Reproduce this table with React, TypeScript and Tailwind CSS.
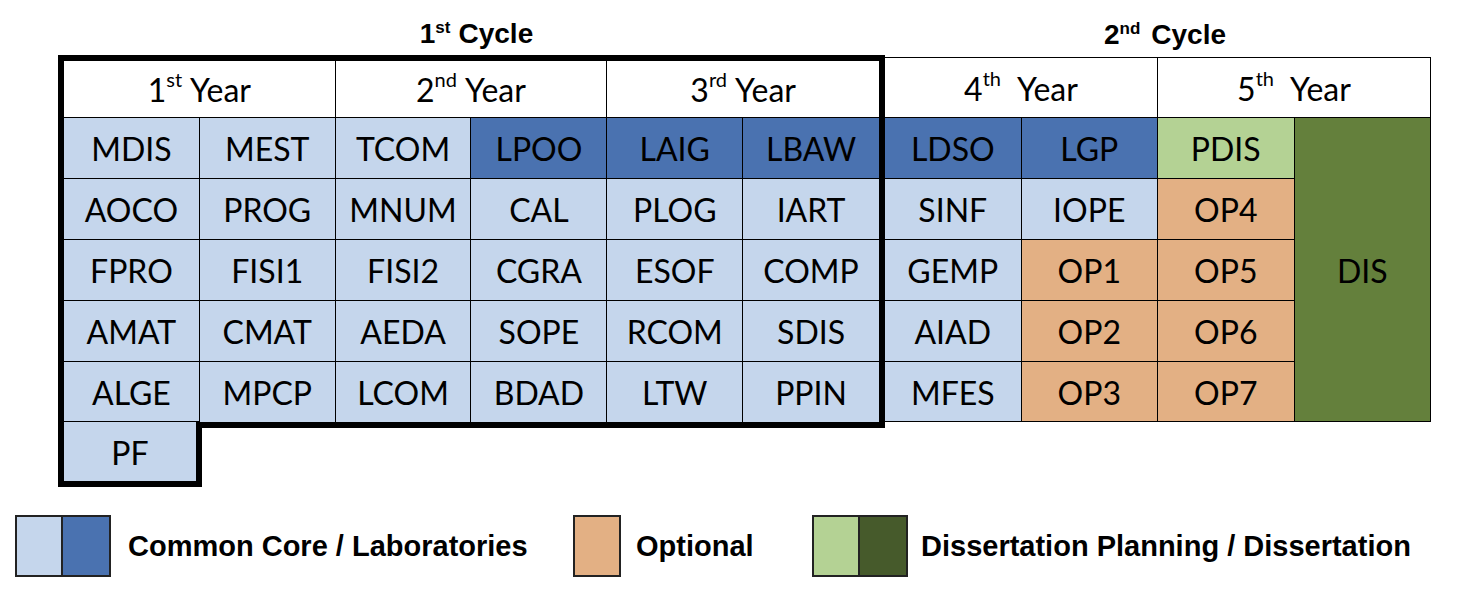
import React from "react";

type C = "L" | "D" | "G" | "O";
const bg: Record<C, string> = {
  L: "bg-[#c5d6ec]",
  D: "bg-[#4a72b0]",
  G: "bg-[#b4d294]",
  O: "bg-[#e3b084]",
};

const firstRows: [string, C][][] = [
  [["MDIS", "L"], ["MEST", "L"], ["TCOM", "L"], ["LPOO", "D"], ["LAIG", "D"], ["LBAW", "D"]],
  [["AOCO", "L"], ["PROG", "L"], ["MNUM", "L"], ["CAL", "L"], ["PLOG", "L"], ["IART", "L"]],
  [["FPRO", "L"], ["FISI1", "L"], ["FISI2", "L"], ["CGRA", "L"], ["ESOF", "L"], ["COMP", "L"]],
  [["AMAT", "L"], ["CMAT", "L"], ["AEDA", "L"], ["SOPE", "L"], ["RCOM", "L"], ["SDIS", "L"]],
  [["ALGE", "L"], ["MPCP", "L"], ["LCOM", "L"], ["BDAD", "L"], ["LTW", "L"], ["PPIN", "L"]],
];

const secondRows: [string, C][][] = [
  [["LDSO", "D"], ["LGP", "D"], ["PDIS", "G"]],
  [["SINF", "L"], ["IOPE", "L"], ["OP4", "O"]],
  [["GEMP", "L"], ["OP1", "O"], ["OP5", "O"]],
  [["AIAD", "L"], ["OP2", "O"], ["OP6", "O"]],
  [["MFES", "L"], ["OP3", "O"], ["OP7", "O"]],
];

const rowH = ["h-[61px]", "h-[61px]", "h-[61px]", "h-[61px]", "h-[60px]"];

const cellFont = "font-['Lato',sans-serif] text-[32px] leading-none text-black pt-[2px]";
const titleFont = "font-['Liberation_Sans',Arial,sans-serif] font-bold text-[28px] leading-none text-black";

function YearHeader({ n, sup, last }: { n: string; sup: string; last?: boolean }) {
  return (
    <div
      className={`col-span-2 flex items-center justify-center bg-white border-b border-black ${
        last ? "" : "border-r"
      } ${cellFont}`}
    >
      <span>{n}</span>
      <span className="text-[20px] leading-none relative top-[-11px]">{sup}</span>
      <span className="ml-[8px]">Year</span>
    </div>
  );
}

export default function App() {
  return (
    <div className="w-[1483px] h-[612px] bg-white overflow-hidden">
      <div className="flex pl-[58px]">
        {/* 1st cycle */}
        <div className="w-[827px] flex flex-col">
          <div className={`h-[55px] pt-[20px] flex justify-center pl-[10px] ${titleFont}`}>
            <span>1</span>
            <span className="text-[17px] relative top-[-1px]">st</span>
            <span className="ml-[8px]">Cycle</span>
          </div>
          <div className="border-[6px] border-b-0 border-black grid grid-cols-6">
            <div className="col-span-6 grid grid-cols-6 h-[57px]">
              <YearHeader n="1" sup="st" />
              <YearHeader n="2" sup="nd" />
              <YearHeader n="3" sup="rd" last />
            </div>
            {firstRows.map((row, ri) =>
              row.map(([name, c], ci) => {
                const lastRow = ri === firstRows.length - 1;
                const lastCol = ci === row.length - 1;
                const borders = `${lastCol ? "" : "border-r"} ${lastRow && ci > 0 ? "" : "border-b"}`;
                return (
                  <div
                    key={name}
                    className={`${rowH[ri]} ${bg[c]} ${borders} border-black flex items-center justify-center ${cellFont}`}
                  >
                    {name}
                  </div>
                );
              })
            )}
          </div>
          <div className="flex">
            <div
              className={`w-[144px] h-[65px] border-[6px] border-t-0 border-black ${bg.L} flex items-center justify-center ${cellFont}`}
            >
              PF
            </div>
            <div className="flex-1 h-[6px] bg-black" />
          </div>
        </div>

        {/* 2nd cycle */}
        <div className="w-[546px] flex flex-col">
          <div className={`h-[57px] pt-[21px] flex justify-center pl-[14px] ${titleFont}`}>
            <span>2</span>
            <span className="text-[17px] relative top-[-1px]">nd</span>
            <span className="ml-[11px]">Cycle</span>
          </div>
          <div className="border-t border-black grid grid-cols-4 grid-rows-[60px_61px_61px_61px_61px_60px]">
            <div
              className={`col-span-2 flex items-center justify-center bg-white border-b border-r border-black ${cellFont}`}
            >
              <span>4</span>
              <span className="text-[20px] leading-none relative top-[-11px]">th</span>
              <span className="ml-[16px]">Year</span>
            </div>
            <div
              className={`col-span-2 flex items-center justify-center bg-white border-b border-r border-black ${cellFont}`}
            >
              <span>5</span>
              <span className="text-[20px] leading-none relative top-[-11px]">th</span>
              <span className="ml-[16px]">Year</span>
            </div>
            {secondRows.map((row, ri) =>
              row.map(([name, c], ci) => (
                <div
                  key={name}
                  className={`${bg[c]} border-r border-b border-black flex items-center justify-center ${cellFont}`}
                  style={{ gridRowStart: ri + 2, gridColumnStart: ci + 1 }}
                >
                  {name}
                </div>
              ))
            )}
            <div
              className={`col-start-4 row-start-2 row-span-5 bg-[#64803c] border-r border-b border-black flex items-center justify-center ${cellFont}`}
            >
              DIS
            </div>
          </div>
        </div>
      </div>

      {/* Legend */}
      <div className="mt-[28px] pl-[15px] flex items-center font-['Liberation_Sans',Arial,sans-serif] font-bold text-[29px] leading-none text-black">
        <div className="flex w-[96px] h-[62px] border-2 border-[#222]">
          <div className="w-1/2 h-full bg-[#c5d6ec] border-r-2 border-[#222]" />
          <div className="w-1/2 h-full bg-[#4a72b0]" />
        </div>
        <span className="ml-[17px] w-[445px]">Common Core / Laboratories</span>
        <div className="w-[48px] h-[62px] border-2 border-[#222] bg-[#e3b084]" />
        <span className="ml-[15px] w-[176px]">Optional</span>
        <div className="flex w-[96px] h-[62px] border-2 border-[#222]">
          <div className="w-1/2 h-full bg-[#b4d294] border-r-2 border-[#222]" />
          <div className="w-1/2 h-full bg-[#465a2b]" />
        </div>
        <span className="ml-[13px]">Dissertation Planning / Dissertation</span>
      </div>
    </div>
  );
}
